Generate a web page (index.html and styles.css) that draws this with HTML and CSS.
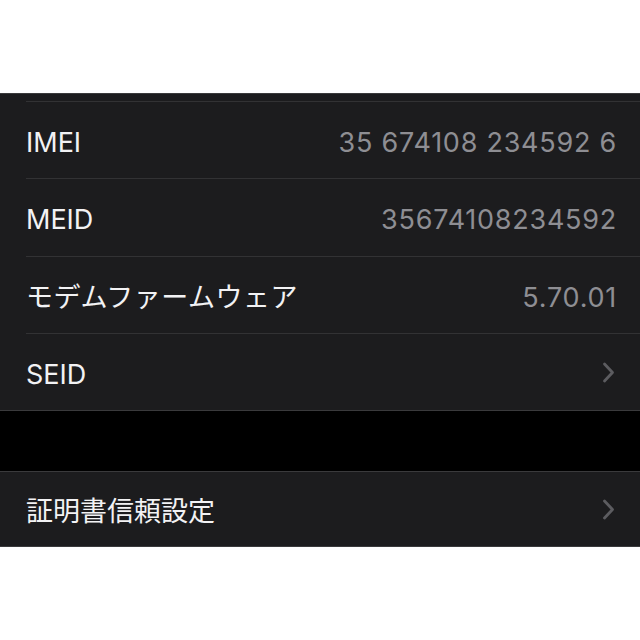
FILE: index.html
```html
<!DOCTYPE html>
<html lang="ja">
<head>
<meta charset="utf-8">
<link rel="stylesheet" href="styles.css">
</head>
<body>
<div class="spacer"></div>
<section class="group">
  <div class="partial"></div>
  <div class="row r1"><div class="inner"><span class="label">IMEI</span><span class="value">35 674108 234592 6</span></div></div>
  <div class="row r2"><div class="inner"><span class="label">MEID</span><span class="value">35674108234592</span></div></div>
  <div class="row r3"><div class="inner"><span class="label ja">モデムファームウェア</span><span class="value">5.70.01</span></div></div>
  <div class="row r4"><div class="inner"><span class="label">SEID</span><svg class="chev" width="13" height="21" viewBox="0 0 13 21"><path d="M2.5 2 L10.5 10.5 L2.5 19" fill="none" stroke="#5c5c60" stroke-width="2.8" stroke-linecap="round" stroke-linejoin="round"/></svg></div></div>
</section>
<div class="gap"></div>
<section class="group">
  <div class="row r5"><div class="inner first"><span class="label">証明書信頼設定</span><svg class="chev" width="13" height="21" viewBox="0 0 13 21"><path d="M2.5 2 L10.5 10.5 L2.5 19" fill="none" stroke="#5c5c60" stroke-width="2.8" stroke-linecap="round" stroke-linejoin="round"/></svg></div></div>
</section>
</body>
</html>
```
FILE: styles.css
```css
html, body {
  margin: 0;
  padding: 0;
  background: #ffffff;
}
body {
  font-family: Inter, "Noto Sans CJK JP", sans-serif;
  width: 640px;
  overflow: hidden;
}
.spacer {
  height: 93px;
}
.group {
  background: #1c1c1e;
  border-top: 1px solid #3a3a3c;
  border-bottom: 1px solid #3a3a3c;
}
.partial {
  height: 7px;
}
.row {
  padding-left: 26px;
}
.inner {
  border-top: 1px solid #323234;
  display: flex;
  align-items: center;
  justify-content: space-between;
  padding-right: 24px;
  box-sizing: border-box;
}
.inner.first {
  border-top: none;
}
.r1 .inner { height: 77px; }
.r2 .inner { height: 78px; }
.r3 .inner { height: 77px; }
.r4 .inner { height: 77px; }
.r5 .inner { height: 74px; }
.label {
  color: #f2f2f4;
  font-size: 27px;
  line-height: 1;
  padding-top: 4px;
}
.label.ja {
  letter-spacing: 0.5px;
}
.value {
  color: #8e8e93;
  font-size: 27px;
  line-height: 1;
  padding-top: 4px;
  letter-spacing: 0.75px;
  margin-right: -1px;
}
.chev {
  display: block;
  margin-right: 1px;
}
.gap {
  height: 60px;
  background: #000000;
}
```
